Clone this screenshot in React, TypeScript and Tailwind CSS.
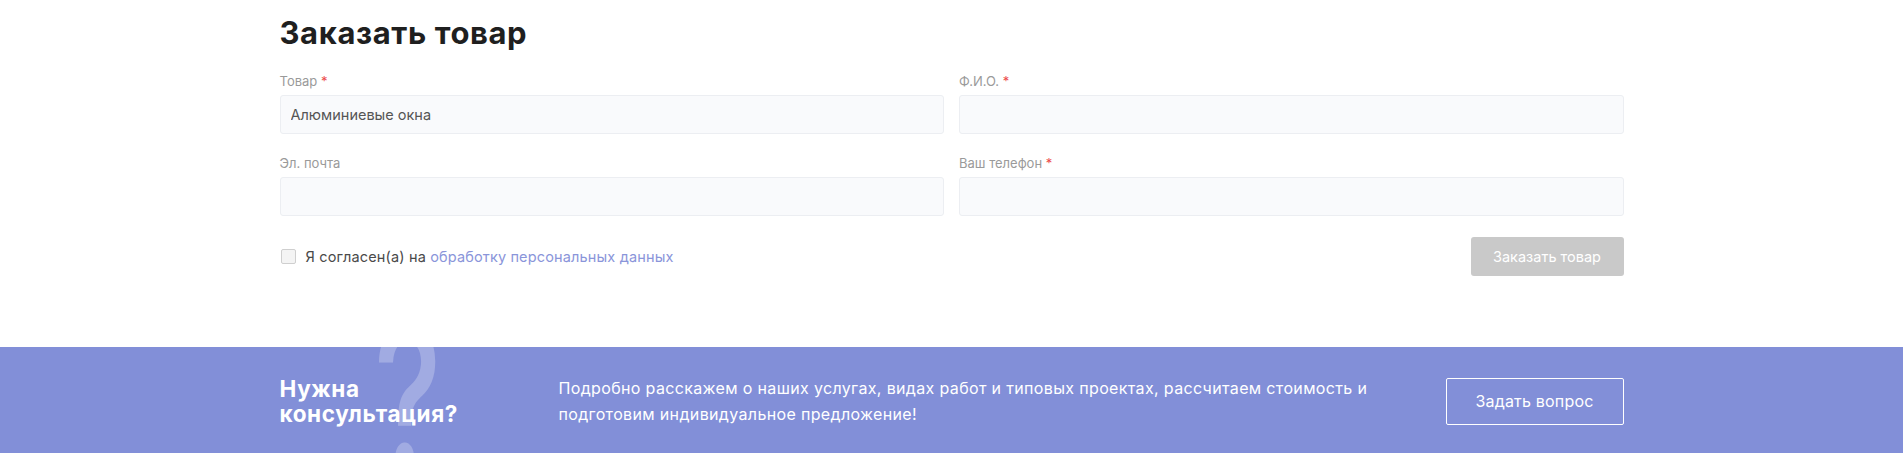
import { useState } from 'react';

const fields = [
  { label: 'Товар', required: true, value: 'Алюминиевые окна' },
  { label: 'Ф.И.О.', required: true, value: '' },
  { label: 'Эл. почта', required: false, value: '' },
  { label: 'Ваш телефон', required: true, value: '' },
];

export default function App() {
  const [values, setValues] = useState(fields.map((f) => f.value));
  const [agree, setAgree] = useState(false);

  return (
    <div className="bg-white font-['Inter','Noto_Sans',sans-serif] antialiased">
      {/* Order form */}
      <section className="w-[1344px] mx-auto pt-[12px] pb-[71px]">
        <h2 className="text-[31px] leading-[42px] font-bold text-[#1f1f1f] tracking-[0.6px]">Заказать товар</h2>

        <div className="mt-[19px] grid grid-cols-2 gap-x-[15px] gap-y-[21px]">
          {fields.map((f, i) => (
            <label key={f.label} className="block">
              <span className="block text-[13px] leading-[16px] text-[#9a9a9a]">
                {f.label}
                {f.required && <span className="text-[#ec4b4b]"> *</span>}
              </span>
              <input
                type="text"
                value={values[i]}
                onChange={(e) => setValues((prev) => prev.map((v, j) => (j === i ? e.target.value : v)))}
                className="mt-[6px] block w-full h-[39px] px-[10px] bg-[#f9fafc] border border-[#eceef2] rounded-[3px] text-[14.5px] text-[#555] focus:outline-none focus:border-[#818fd8]"
              />
            </label>
          ))}
        </div>

        <div className="mt-[21px] flex items-center justify-between">
          <label className="flex items-center gap-[10px] cursor-pointer select-none">
            <input
              type="checkbox"
              checked={agree}
              onChange={(e) => setAgree(e.target.checked)}
              className="appearance-none w-[15px] h-[15px] ml-[1px] border border-[#cfcfcf] bg-[#f4f4f4] rounded-[2px] checked:bg-[#818fd8] checked:border-[#818fd8]"
            />
            <span className="text-[14.5px] tracking-[0.15px] text-[#4a4a4a]">
              Я согласен(а) на <a href="#" className="text-[#8a95da]">обработку персональных данных</a>
            </span>
          </label>
          <button
            disabled={!agree}
            className="w-[153px] h-[39px] rounded-[3px] bg-[#c9c9c9] text-white text-[14.5px] enabled:bg-[#818fd8]"
          >
            Заказать товар
          </button>
        </div>
      </section>

      {/* Consultation band */}
      <section className="bg-[#828fd8] overflow-hidden">
        <div className="w-[1344px] mx-auto flex items-center pt-[28px] pb-[28px]">
          <div className="relative w-[279px] shrink-0">
            <span className="absolute left-[94px] top-[-79px] origin-left scale-x-[0.64] text-[200px] leading-none font-medium text-white/25 select-none pointer-events-none">
              ?
            </span>
            <h3 className="relative text-[22.5px] leading-[25px] font-bold tracking-[0.6px] text-white">
              Нужна
              <br />
              консультация?
            </h3>
          </div>
          <p className="w-[830px] text-[16px] leading-[26px] tracking-[0.35px] text-white">
            Подробно расскажем о наших услугах, видах работ и типовых проектах, рассчитаем стоимость и подготовим индивидуальное предложение!
          </p>
          <button className="ml-auto w-[178px] h-[47px] border border-white rounded-[2px] text-white text-[16px] tracking-[0.2px]">
            Задать вопрос
          </button>
        </div>
      </section>
    </div>
  );
}
